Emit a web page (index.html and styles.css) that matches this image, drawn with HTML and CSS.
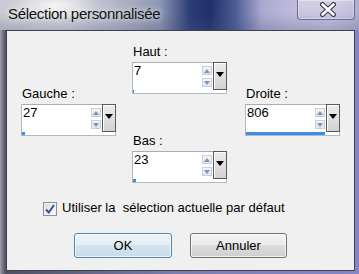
FILE: index.html
```html
<!DOCTYPE html>
<html lang="fr">
<head>
    <meta charset="UTF-8">
    <title>Sélection personnalisée</title>
    <link rel="stylesheet" href="styles.css">
</head>
<body>
    <div class="window">
        <div class="titlebar">
            <span class="title">Sélection personnalisée</span>
            <button class="close" aria-label="Fermer">
                <svg width="18" height="15" viewBox="0 0 18 15">
                    <path d="M3.5 2.5 L14.5 12.5 M14.5 2.5 L3.5 12.5" stroke="#3b3a55" stroke-width="5" stroke-linecap="round"/>
                    <path d="M3.5 2.5 L14.5 12.5 M14.5 2.5 L3.5 12.5" stroke="#ffffff" stroke-width="2.6" stroke-linecap="round"/>
                </svg>
            </button>
        </div>

        <div class="client">
            <div class="fields">
                <div class="col side">
                    <div class="field">
                        <label>Gauche :</label>
                        <div class="spin">
                            <span class="value">27</span>
                            <span class="arrows"><span class="up"></span><span class="down"></span></span>
                            <span class="drop"></span>
                            <span class="bar" style="width: 3px"></span>
                        </div>
                    </div>
                </div>

                <div class="col middle">
                    <div class="field">
                        <label>Haut :</label>
                        <div class="spin">
                            <span class="value">7</span>
                            <span class="arrows"><span class="up"></span><span class="down"></span></span>
                            <span class="drop"></span>
                            <span class="bar" style="width: 1px"></span>
                        </div>
                    </div>
                    <div class="field">
                        <label>Bas :</label>
                        <div class="spin">
                            <span class="value">23</span>
                            <span class="arrows"><span class="up"></span><span class="down"></span></span>
                            <span class="drop"></span>
                            <span class="bar" style="width: 3px"></span>
                        </div>
                    </div>
                </div>

                <div class="col side right">
                    <div class="field">
                        <label>Droite :</label>
                        <div class="spin">
                            <span class="value">806</span>
                            <span class="arrows"><span class="up"></span><span class="down"></span></span>
                            <span class="drop"></span>
                            <span class="bar" style="width: 79px"></span>
                        </div>
                    </div>
                </div>
            </div>

            <label class="check">
                <span class="checkbox">
                    <svg width="12" height="12" viewBox="0 0 12 12">
                        <path d="M2 6.5 L4.8 9.5 L10 2" fill="none" stroke="#3a5190" stroke-width="2"/>
                    </svg>
                </span>
                <span class="check-text">Utiliser la&nbsp; sélection actuelle par défaut</span>
            </label>

            <div class="buttons">
                <button class="btn default">OK</button>
                <button class="btn cancel">Annuler</button>
            </div>
        </div>
    </div>
</body>
</html>
```

FILE: styles.css
```css
body {
    margin: 0;
    width: 359px;
    height: 274px;
    overflow: hidden;
    font-family: "Liberation Sans", Arial, sans-serif;
    font-size: 13px;
    color: #000;
}

.window {
    height: 274px;
    display: flex;
    flex-direction: column;
    background: linear-gradient(90deg, #a2a2ab 0, #70707e 3px, #4f5060 6px, #7b7fae 50%, #8587c4 100%);
}

.titlebar {
    height: 30px;
    flex-shrink: 0;
    display: flex;
    justify-content: space-between;
    align-items: flex-start;
    background:
        radial-gradient(ellipse 45px 14px at 55px 6px, rgba(255, 255, 255, 0.75), rgba(255, 255, 255, 0)),
        linear-gradient(180deg, rgba(0, 0, 0, 0) 45%, rgba(70, 80, 120, 0.25) 100%),
        linear-gradient(90deg, #c9cad3 0, #d6d6dc 60px, #b7bbca 110px, #8f97b4 160px, #2c3c76 190px, #1f2f6a 210px, #4e5c94 235px, #aaa9d1 262px, #bdb9da 290px, #c5c1dd 330px, #b0aed3 359px);
}

.title {
    padding: 5px 0 0 8px;
    font-size: 15px;
    line-height: 18px;
    letter-spacing: -0.3px;
    color: #111;
    text-shadow: 0 0 6px rgba(255, 255, 255, 0.9);
}

.close {
    box-sizing: border-box;
    width: 58px;
    height: 20px;
    margin-right: 4px;
    padding: 0;
    display: flex;
    align-items: center;
    justify-content: center;
    border: 1px solid rgba(70, 68, 110, 0.7);
    border-top: none;
    border-radius: 0 0 4px 4px;
    background: linear-gradient(rgba(255, 255, 255, 0.3), rgba(255, 255, 255, 0.08));
    box-shadow: inset 0 0 0 1px rgba(255, 255, 255, 0.35);
}

.close svg {
    margin-left: 4px;
}

.client {
    flex: 1;
    margin: 0 4px 3px 6px;
    border: 1px solid #3e4150;
    background: #f0f0f0;
}

.fields {
    display: flex;
    align-items: flex-start;
    padding: 13px 0 0 14px;
}

.col {
    width: 95px;
}

.side {
    margin-top: 42px;
}

.middle {
    margin-left: 16px;
}

.right {
    margin-left: 18px;
}

.field label {
    display: block;
    line-height: 15px;
    padding-left: 1px;
    margin-bottom: 3px;
}

.middle .field + .field {
    margin-top: 39px;
}

.spin {
    box-sizing: border-box;
    width: 95px;
    height: 32px;
    display: grid;
    grid-template-columns: 1fr 10px 13px;
    grid-template-rows: 27px 3px;
    column-gap: 1px;
    border: 1px solid #b5b9c0;
    border-top-color: #abadb3;
    background: #fff;
}

.value {
    padding-left: 1px;
    font-size: 13px;
    line-height: 16px;
}

.arrows {
    display: flex;
    flex-direction: column;
    gap: 3px;
    padding-top: 3px;
}

.up,
.down {
    box-sizing: border-box;
    height: 9px;
    display: flex;
    align-items: center;
    justify-content: center;
    border: 1px solid #c9d0dc;
    background: linear-gradient(#f4f6fa, #dfe4ee);
}

.up::before {
    content: "";
    border-left: 3px solid transparent;
    border-right: 3px solid transparent;
    border-bottom: 4px solid #8190b8;
}

.down::before {
    content: "";
    border-left: 3px solid transparent;
    border-right: 3px solid transparent;
    border-top: 4px solid #8190b8;
}

.drop {
    box-sizing: border-box;
    height: 28px;
    margin: -1px -1px 0 0;
    display: flex;
    justify-content: center;
    padding-top: 9px;
    border: 1px solid #5a5a5e;
    box-shadow: inset 1px 1px 0 #fdfdfd;
    background: linear-gradient(#ececec, #d2d2d2);
}

.drop::before {
    content: "";
    height: 0;
    border-left: 4px solid transparent;
    border-right: 4px solid transparent;
    border-top: 5px solid #000;
}

.bar {
    grid-column: 1 / -1;
    grid-row: 2;
    background: #3a8ee6;
}

.check {
    display: flex;
    align-items: flex-start;
    margin: 19px 0 0 36px;
}

.checkbox {
    box-sizing: border-box;
    width: 14px;
    height: 14px;
    display: flex;
    align-items: center;
    justify-content: center;
    border: 1px solid #8e8f8f;
    background: linear-gradient(135deg, #dcdcdc, #fbfbfb);
    box-shadow: inset 0 0 0 1px #f4f4f4;
}

.check-text {
    margin-left: 5px;
    margin-top: -1px;
    line-height: 14px;
}

.buttons {
    display: flex;
    gap: 18px;
    margin: 17px 0 0 67px;
}

.btn {
    box-sizing: border-box;
    width: 98px;
    height: 25px;
    padding: 0;
    font-family: "Liberation Sans", Arial, sans-serif;
    font-size: 13px;
    color: #000;
    border: 1px solid #707070;
    border-radius: 3px;
    background: linear-gradient(#f2f2f2 0%, #ebebeb 50%, #dddddd 50%, #cfcfcf 100%);
    box-shadow: inset 0 0 0 1px rgba(255, 255, 255, 0.7);
}

.btn.default {
    border-color: #4a87b4;
    background: linear-gradient(#eef5f9 0%, #e1edf4 50%, #d3e4ef 50%, #c8dcea 100%);
}

.btn.cancel {
    width: 97px;
}
```
